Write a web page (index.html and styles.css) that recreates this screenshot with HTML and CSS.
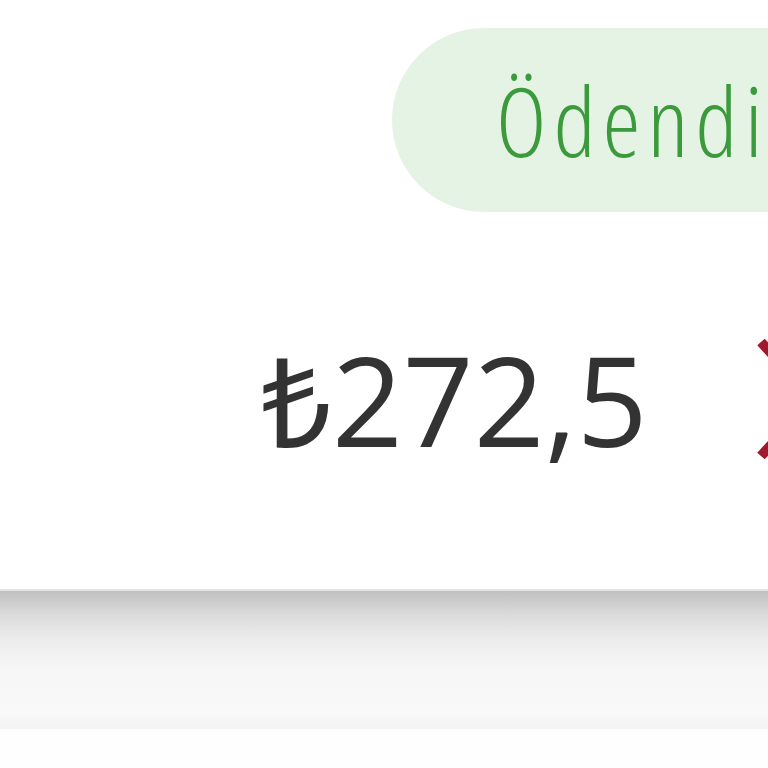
FILE: index.html
```html
<!DOCTYPE html>
<html>

<head>
  <title>payment</title>
  <link rel="stylesheet" href="styles.css">
</head>

<body>
  <div class="payment-card">
    <div class="status-row">
      <span class="status-badge">Ödendi</span>
    </div>
    <div class="amount-row">
      <span class="amount">₺272,5</span>
      <svg class="cancel-icon" width="120" height="130" viewBox="0 0 120 130">
        <path d="M8 8 L112 122 M112 8 L8 122" stroke="#a3172c" stroke-width="10" fill="none" />
      </svg>
    </div>
  </div>
  <div class="list-divider"></div>
  <div class="list-rest"></div>
</body>

</html>
```

FILE: styles.css
```css
html,
body {
  margin: 0;
  width: 768px;
  height: 768px;
  overflow: hidden;
  background: #fefefe;
}

body {
  font-family: "Open Sans", "Noto Sans", sans-serif;
}

.payment-card {
  background: #ffffff;
  height: 589px;
  padding-top: 28px;
  box-sizing: border-box;
}

.status-row {
  display: flex;
  padding-left: 392px;
}

.status-badge {
  flex: none;
  height: 184px;
  line-height: 184px;
  padding: 0 120px 0 104px;
  border-radius: 92px;
  background: #e4f3e4;
  color: #3b9a3b;
  font-size: 96px;
  font-weight: 300;
  font-stretch: 86%;
  letter-spacing: 7px;
  white-space: nowrap;
}

.amount-row {
  display: flex;
  align-items: center;
  padding-left: 261px;
  margin-top: 113px;
  gap: 105px;
}

.amount {
  flex: none;
  font-size: 124px;
  line-height: 148px;
  color: #333333;
  white-space: nowrap;
}

.cancel-icon {
  flex: none;
}

.list-divider {
  height: 138px;
  border-top: 2px solid #e4e4e4;
  background: linear-gradient(#c0c0c0, #dcdcdc 18%, #ececec 35%, #f6f6f6 55%, #f9f9f9 88%, #f2f2f2);
}

.list-rest {
  height: 40px;
  background: #fefefe;
}
```
